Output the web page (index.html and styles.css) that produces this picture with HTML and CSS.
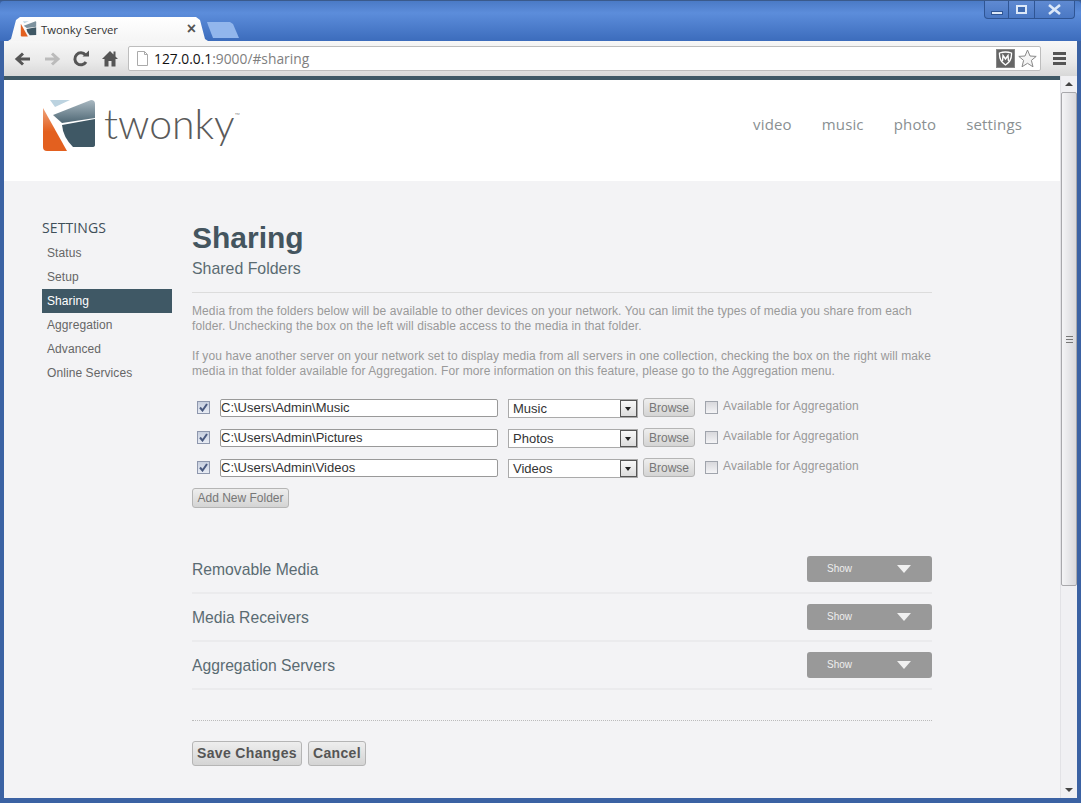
FILE: index.html
```html
<!DOCTYPE html>
<html lang="en">
<head>
  <meta charset="UTF-8" />
  <title>Twonky Server</title>
  <link rel="stylesheet" href="styles.css">
</head>
<body>
  <div class="window">

    <!-- Tabs -->
    <div class="tabstrip">
      <div class="tab">
        <svg class="favicon" width="17" height="16" viewBox="0 0 54 54">
          <path d="M11 16 L51 1 Q53 1 53 4 L53 19 L21 24 Z" fill="#7d929e"/>
          <path d="M20 27 L53 21 L53 47 L31 48 Q21 38 20 27 Z" fill="#3f5865"/>
          <path d="M1 9 L25 52 L5 52 Q1 52 1 48 Z" fill="#e3601f"/>
          <path d="M8 1 L28 1 L13 8 Z" fill="#bcd3e0"/>
        </svg>
        <span class="tab-title">Twonky Server</span>
        <span class="tab-close">×</span>
      </div>
      <div class="newtab"></div>
      <div class="win-buttons">
        <div class="win-btn btn-min"><span class="min-bar"></span></div>
        <div class="win-btn btn-max"><span class="max-box"></span></div>
        <div class="win-btn btn-close">
          <svg width="15" height="11" viewBox="0 0 15 11"><path d="M2 1 L13 10 M13 1 L2 10" stroke="#dce8f8" stroke-width="2.6"/></svg>
        </div>
      </div>
    </div>

    <!-- Toolbar -->
    <div class="toolbar">
      <div class="tool">
        <svg width="18" height="16" viewBox="0 0 18 16"><path d="M16 8 H4 M9 2.5 L3 8 L9 13.5" fill="none" stroke="#555" stroke-width="3"/></svg>
      </div>
      <div class="tool">
        <svg width="18" height="16" viewBox="0 0 18 16"><path d="M2 8 H14 M9 2.5 L15 8 L9 13.5" fill="none" stroke="#bbb" stroke-width="3"/></svg>
      </div>
      <div class="tool">
        <svg width="18" height="18" viewBox="0 0 18 18"><path d="M14 12 A6 6 0 1 1 13.5 5" fill="none" stroke="#555" stroke-width="3"/><path d="M10.5 6.5 H17 V0.5 Z" fill="#555"/></svg>
      </div>
      <div class="tool">
        <svg width="18" height="17" viewBox="0 0 18 17"><path d="M9 1 L1 9 H3.5 V16.5 H7.5 V11 H10.5 V16.5 H14.5 V9 H17 L14.5 6.5 V1.5 H12.5 V4.5 Z" fill="#555"/></svg>
      </div>
      <div class="urlbar">
        <svg class="page-icon" width="13" height="15" viewBox="0 0 13 15"><path d="M1.5 .5 H8.5 L11.5 3.5 V14.5 H1.5 Z M8.5 .5 V3.5 H11.5" fill="#fff" stroke="#aaa"/></svg>
        <span class="url"><span class="url-host">127.0.0.1</span>:9000/#sharing</span>
        <div class="shield">
          <svg width="15" height="15" viewBox="0 0 15 15"><path d="M1.5 2 Q7.5 0 13.5 2 Q14 10 7.5 14 Q1 10 1.5 2 Z" fill="none" stroke="#fff" stroke-width="1.3"/><path d="M4.5 10 L5 4.5 L7.5 8 L10 4.5 L10.5 10" fill="none" stroke="#fff" stroke-width="1.4"/></svg>
        </div>
        <svg width="19" height="19" viewBox="0 0 19 19"><path d="M9.5 1 L12 7 L18.2 7.4 L13.4 11.4 L15 17.8 L9.5 14.3 L4 17.8 L5.6 11.4 L.8 7.4 L7 7 Z" fill="#f4f4f4" stroke="#888"/></svg>
      </div>
      <div class="menu-icon"><span></span><span></span><span></span></div>
    </div>
    <div class="pagebar"></div>

    <div class="viewport">
      <div class="page">

        <!-- Header -->
        <div class="header">
          <div class="logo">
            <svg width="54" height="54" viewBox="0 0 54 54">
              <defs>
                <linearGradient id="logo-top" x1="0" y1="0" x2="0" y2="1">
                  <stop offset="0" stop-color="#a9b8c1"/>
                  <stop offset="1" stop-color="#4f6875"/>
                </linearGradient>
                <linearGradient id="logo-orange" x1="0" y1="0" x2="0" y2="1">
                  <stop offset="0" stop-color="#efa27a"/>
                  <stop offset=".55" stop-color="#e3601f"/>
                  <stop offset="1" stop-color="#e3601f"/>
                </linearGradient>
              </defs>
              <path d="M11 16 L49 1 Q53 1 53 5 L53 19 L20 24 Z" fill="url(#logo-top)"/>
              <path d="M20 26 L53 20 L53 46 Q53 48 50 48 L31 48 Q21 38 20 26 Z" fill="#3f5865"/>
              <path d="M1 9 L25 52 L5 52 Q1 52 1 48 Z" fill="url(#logo-orange)"/>
              <path d="M8 1 L28 1 L13 8 Z" fill="#bcd3e0"/>
            </svg>
            <span class="logo-text">twonky<sup class="logo-tm">™</sup></span>
          </div>
          <div class="topnav">
            <a href="#">video</a>
            <a href="#">music</a>
            <a href="#">photo</a>
            <a href="#">settings</a>
          </div>
        </div>

        <div class="content">
          <!-- Sidebar -->
          <div class="sidebar">
            <div class="side-title">SETTINGS</div>
            <a class="side-link" href="#">Status</a>
            <a class="side-link" href="#">Setup</a>
            <a class="side-link active" href="#">Sharing</a>
            <a class="side-link" href="#">Aggregation</a>
            <a class="side-link" href="#">Advanced</a>
            <a class="side-link" href="#">Online Services</a>
          </div>

          <!-- Main -->
          <div class="main">
            <h1>Sharing</h1>
            <h2>Shared Folders</h2>
            <div class="intro">
              <p>Media from the folders below will be available to other devices on your network. You can limit the types of media you share from each folder. Unchecking the box on the left will disable access to the media in that folder.</p>
              <p>If you have another server on your network set to display media from all servers in one collection, checking the box on the right will make media in that folder available for Aggregation. For more information on this feature, please go to the Aggregation menu.</p>
            </div>

            <div class="folders">
              <div class="folder-row">
                <span class="check checked"><svg width="9" height="9" viewBox="0 0 9 9"><path d="M1 4.5 L3.5 7.5 L8 1" fill="none" stroke="#4a5a80" stroke-width="2"/></svg></span>
                <input class="path-input" value="C:\Users\Admin\Music" />
                <div class="select-box">Music<span class="select-arrow"></span></div>
                <button class="btn browse">Browse</button>
                <span class="check"></span>
                <span class="agg-label">Available for Aggregation</span>
              </div>
              <div class="folder-row">
                <span class="check checked"><svg width="9" height="9" viewBox="0 0 9 9"><path d="M1 4.5 L3.5 7.5 L8 1" fill="none" stroke="#4a5a80" stroke-width="2"/></svg></span>
                <input class="path-input" value="C:\Users\Admin\Pictures" />
                <div class="select-box">Photos<span class="select-arrow"></span></div>
                <button class="btn browse">Browse</button>
                <span class="check"></span>
                <span class="agg-label">Available for Aggregation</span>
              </div>
              <div class="folder-row">
                <span class="check checked"><svg width="9" height="9" viewBox="0 0 9 9"><path d="M1 4.5 L3.5 7.5 L8 1" fill="none" stroke="#4a5a80" stroke-width="2"/></svg></span>
                <input class="path-input" value="C:\Users\Admin\Videos" />
                <div class="select-box">Videos<span class="select-arrow"></span></div>
                <button class="btn browse">Browse</button>
                <span class="check"></span>
                <span class="agg-label">Available for Aggregation</span>
              </div>
            </div>
            <button class="btn add-folder">Add New Folder</button>

            <div class="sections">
              <div class="section-row">
                <span class="section-name">Removable Media</span>
                <div class="show-btn">Show<span class="show-arrow"></span></div>
              </div>
              <div class="section-row">
                <span class="section-name">Media Receivers</span>
                <div class="show-btn">Show<span class="show-arrow"></span></div>
              </div>
              <div class="section-row">
                <span class="section-name">Aggregation Servers</span>
                <div class="show-btn">Show<span class="show-arrow"></span></div>
              </div>
            </div>

            <div class="actions">
              <button class="btn action">Save Changes</button>
              <button class="btn action">Cancel</button>
            </div>
          </div>
        </div>
      </div>

      <!-- Scrollbar -->
      <div class="scrollbar">
        <div class="scroll-end"><span class="arrow-up"></span></div>
        <div class="scroll-thumb"><span class="grip"></span></div>
        <div class="scroll-track"></div>
        <div class="scroll-end"><span class="arrow-down"></span></div>
      </div>
    </div>
  </div>
</body>
</html>
```

FILE: styles.css
```css
* {
  box-sizing: border-box;
}

html, body {
  margin: 0;
  padding: 0;
  overflow: hidden;
}

body {
  font-family: 'Liberation Sans', Arial, sans-serif;
}

.window {
  width: 1081px;
  height: 803px;
  display: flex;
  flex-direction: column;
  padding: 0 4px 5px;
  background: #3b62a3;
  border-top: 1px solid #3a5a8c;
}

/* tabs */
.tabstrip {
  height: 40px;
  margin: 0 -4px;
  padding: 16px 0 0 8px;
  display: flex;
  align-items: flex-start;
  background: linear-gradient(#4a7ac6, #5c8ddb 30%, #3c6cbc);
  border-radius: 4px 4px 0 0;
}

.tab {
  width: 200px;
  height: 24px;
  padding: 0 12px 0 12px;
  display: flex;
  align-items: center;
  background: linear-gradient(#ffffff, #f5f5f5);
  clip-path: polygon(0 100%, 3px 92%, 8px 12%, 12px 0, 188px 0, 192px 12%, 197px 92%, 200px 100%);
}

.favicon {
  flex: none;
  margin-right: 4px;
}

.tab-title {
  flex: 1;
  font-family: 'Open Sans', sans-serif;
  font-size: 11.3px;
  color: #333;
}

.tab-close {
  font-size: 16px;
  font-weight: bold;
  color: #555;
}

.newtab {
  width: 32px;
  height: 16px;
  margin: 5px 0 0 -1px;
  background: #92b6ec;
  clip-path: polygon(0 0, 23px 0, 26px 2px, 32px 100%, 6px 100%, 1px 3px);
}

.win-buttons {
  margin-left: auto;
  margin-right: 6px;
  margin-top: -16px;
  display: flex;
  height: 18px;
  background: linear-gradient(#5f8ad2, #4a78c4);
  border: 1px solid #2f5594;
  border-top: none;
  border-radius: 0 0 4px 4px;
}

.win-btn {
  display: flex;
  align-items: center;
  justify-content: center;
  border-right: 1px solid #2f5594;
}

.btn-min {
  width: 24px;
}

.btn-max {
  width: 26px;
}

.btn-close {
  width: 39px;
  border-right: none;
}

.min-bar {
  width: 12px;
  height: 4px;
  margin-top: 6px;
  background: #dce8f8;
  border: 1px solid #2f5594;
}

.max-box {
  width: 11px;
  height: 9px;
  border: 2px solid #dce8f8;
  background: #3f6ab0;
}

/* toolbar */
.toolbar {
  height: 35px;
  padding-left: 4px;
  display: flex;
  align-items: center;
  background: linear-gradient(#f7f7f7, #e9e9e9 60%, #d8d8d8);
}

.tool {
  width: 29px;
  height: 25px;
  flex: none;
  display: flex;
  align-items: center;
  justify-content: center;
}

.urlbar {
  width: 913px;
  height: 25px;
  margin-left: 4px;
  padding: 0 3px 0 7px;
  display: flex;
  align-items: center;
  background: #fff;
  border: 1px solid #bdbdbd;
  border-radius: 2px;
}

.page-icon {
  flex: none;
  margin-right: 5px;
}

.url {
  flex: 1;
  font-family: 'Open Sans', sans-serif;
  font-size: 13.8px;
  color: #808080;
}

.url-host {
  color: #111;
}

.shield {
  width: 19px;
  height: 19px;
  margin-right: 3px;
  display: flex;
  align-items: center;
  justify-content: center;
  background: #666;
  border: 1px solid #888;
}

.menu-icon {
  margin-left: 12px;
  display: flex;
  flex-direction: column;
  gap: 2px;
}

.menu-icon span {
  display: block;
  width: 13px;
  height: 3px;
  background: #555;
}

.pagebar {
  height: 4px;
  flex: none;
  margin-right: 17px;
  background: #3f5865;
}

.viewport {
  flex: 1;
  display: flex;
  min-height: 0;
  background: #f3f3f5;
}

.page {
  flex: 1;
  overflow: hidden;
}

/* header */
.header {
  height: 101px;
  padding: 19px 38px 0 38px;
  display: flex;
  justify-content: space-between;
  align-items: flex-start;
  background: #fff;
}

.logo {
  display: flex;
  align-items: flex-start;
}

.logo-text {
  margin-left: 8px;
  margin-top: -5px;
  font-family: 'Lato', sans-serif;
  font-weight: 300;
  font-size: 41px;
  line-height: 60px;
  color: #5a5a5a;
}

.logo-tm {
  font-size: 7px;
  vertical-align: 21px;
  line-height: 0;
}

.topnav {
  display: flex;
  gap: 30px;
  padding-top: 15px;
}

.topnav a {
  font-family: 'Open Sans', sans-serif;
  font-size: 15px;
  letter-spacing: .15px;
  line-height: 20px;
  color: #8a9092;
  text-decoration: none;
}

/* content */
.content {
  display: flex;
  gap: 20px;
  padding: 38px 0 0 38px;
}

.sidebar {
  width: 130px;
  flex: none;
}

.side-title {
  height: 22px;
  font-family: 'Open Sans', sans-serif;
  font-size: 14px;
  letter-spacing: .1px;
  line-height: 18px;
  color: #3f4f59;
}

.side-link {
  display: block;
  height: 24px;
  padding-left: 5px;
  font-size: 12px;
  letter-spacing: .08px;
  line-height: 24px;
  color: #666;
  text-decoration: none;
}

.side-link.active {
  background: #3f5865;
  color: #fff;
}

.main {
  width: 740px;
  flex: none;
}

h1 {
  margin: 0;
  font-size: 30px;
  line-height: 37px;
  color: #44555f;
}

h2 {
  margin: 3px 0 0;
  padding-bottom: 13px;
  font-size: 15.9px;
  font-weight: normal;
  line-height: 20px;
  color: #5a6b72;
  border-bottom: 1px solid #dcdcdc;
}

.intro {
  margin-top: 11px;
}

.intro p {
  margin: 0 0 15px;
  font-size: 12px;
  letter-spacing: .1px;
  line-height: 15px;
  color: #999;
}

.folders {
  margin-top: 19px;
}

.folder-row {
  height: 30px;
  padding-left: 5px;
  display: flex;
  align-items: flex-start;
}

.check {
  width: 13px;
  height: 13px;
  flex: none;
  margin-top: 3px;
  display: flex;
  align-items: center;
  justify-content: center;
  background: linear-gradient(#d8d8dc, #f4f4f6);
  border: 1px solid #a0a4ac;
}

.check.checked {
  background: linear-gradient(#c6cede, #e8ecf4);
  border-color: #8e97ad;
}

.path-input {
  width: 278px;
  height: 18px;
  margin: 1px 0 0 10px;
  padding: 0 1px 2px 0;
  font-family: 'Liberation Sans', Arial, sans-serif;
  font-size: 13px;
  color: #333;
  background: #fff;
  border: 1px solid #999;
  border-radius: 2px;
  outline: none;
}

.select-box {
  position: relative;
  width: 130px;
  height: 19px;
  margin: 1px 5px 0 10px;
  padding-left: 4px;
  font-size: 13px;
  line-height: 18px;
  color: #333;
  background: #fff;
  border: 1px solid #aaa;
}

.select-arrow {
  position: absolute;
  top: 0;
  right: 0;
  width: 17px;
  height: 17px;
  background: linear-gradient(#f8f8f8, #dcdcdc);
  border: 1px solid #555;
}

.select-arrow::after {
  content: '';
  position: absolute;
  left: 4px;
  top: 6px;
  border: 3.5px solid transparent;
  border-top: 4px solid #222;
}

.btn {
  font-family: 'Liberation Sans', Arial, sans-serif;
  color: #777;
  background: linear-gradient(#eeeeee, #d4d4d4);
  border: 1px solid #b5b5b5;
  border-radius: 3px;
  padding: 0;
  cursor: pointer;
}

.browse {
  width: 52px;
  height: 19px;
  margin-right: 10px;
  font-size: 12px;
}

.agg-label {
  margin-left: 5px;
  font-size: 12px;
  letter-spacing: .1px;
  line-height: 16px;
  color: #999;
}

.add-folder {
  display: block;
  width: 97px;
  height: 20px;
  font-size: 12px;
}

.sections {
  margin-top: 38px;
}

.section-row {
  height: 48px;
  padding-top: 1px;
  display: flex;
  justify-content: space-between;
  align-items: center;
  border-bottom: 2px solid #ebebed;
}

.section-name {
  font-size: 15.7px;
  color: #5a6b72;
}

.show-btn {
  width: 125px;
  height: 26px;
  margin-top: -1px;
  padding-left: 20px;
  position: relative;
  font-size: 10px;
  line-height: 26px;
  color: #eee;
  background: #999;
  border-radius: 3px;
}

.show-arrow {
  position: absolute;
  right: 21px;
  top: 9px;
  border: 7px solid transparent;
  border-top: 8px solid #f0f0f0;
  border-bottom: none;
}

.actions {
  margin-top: 30px;
  padding-top: 20px;
  display: flex;
  gap: 6px;
  border-top: 1px dotted #bbb;
}

.action {
  height: 25px;
  padding: 0 4px 2px;
  font-size: 14px;
  font-weight: bold;
  letter-spacing: .35px;
  color: #555;
}

/* scrollbar */
.scrollbar {
  width: 17px;
  flex: none;
  margin-top: -4px;
  display: flex;
  flex-direction: column;
  background: #f0f0f3;
  border-left: 1px solid #e2e2e6;
}

.scroll-end {
  height: 16px;
  flex: none;
  display: flex;
  align-items: center;
  justify-content: center;
}

.arrow-up {
  border: 4px solid transparent;
  border-bottom: 4px solid #444;
  border-top: none;
}

.arrow-down {
  border: 4px solid transparent;
  border-top: 4px solid #444;
  border-bottom: none;
}

.scroll-thumb {
  height: 494px;
  flex: none;
  display: flex;
  align-items: center;
  justify-content: center;
  background: linear-gradient(90deg, #f4f4f6, #d8d8dc);
  border: 1px solid #a8a8ac;
  border-radius: 2px;
}

.grip {
  width: 7px;
  height: 7px;
  border-top: 1px solid #777;
  border-bottom: 1px solid #777;
  background: linear-gradient(#777, #777) center / 100% 1px no-repeat;
}

.scroll-track {
  flex: 1;
}
```
